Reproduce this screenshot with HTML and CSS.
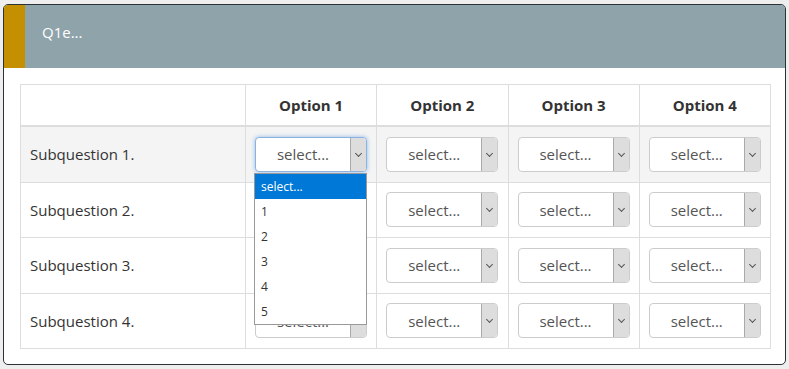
FILE: index.html
```html
<!DOCTYPE html>
<html lang="en">
<head>
  <meta charset="UTF-8">
  <title>Q1e</title>
  <link rel="stylesheet" href="styles.css">
</head>
<body>
<div class="card">
  <div class="card-header">
    <div class="marker"></div>
    <div class="title">Q1e...</div>
  </div>
  <div class="card-body">
    <table class="grid">
      <thead>
        <tr>
          <th class="label-col"></th>
          <th>Option 1</th>
          <th>Option 2</th>
          <th>Option 3</th>
          <th>Option 4</th>
        </tr>
      </thead>
      <tbody>
        <tr class="active">
          <td class="label">Subquestion 1.</td>
          <td>
            <div class="picker">
              <div class="select focused"><span class="value">select...</span><span class="arrow"></span></div>
              <ul class="options">
                <li class="selected">select...</li>
                <li>1</li>
                <li>2</li>
                <li>3</li>
                <li>4</li>
                <li>5</li>
              </ul>
            </div>
          </td>
          <td><div class="select"><span class="value">select...</span><span class="arrow"></span></div></td>
          <td><div class="select"><span class="value">select...</span><span class="arrow"></span></div></td>
          <td><div class="select"><span class="value">select...</span><span class="arrow"></span></div></td>
        </tr>
        <tr>
          <td class="label">Subquestion 2.</td>
          <td><div class="select"><span class="value">select...</span><span class="arrow"></span></div></td>
          <td><div class="select"><span class="value">select...</span><span class="arrow"></span></div></td>
          <td><div class="select"><span class="value">select...</span><span class="arrow"></span></div></td>
          <td><div class="select"><span class="value">select...</span><span class="arrow"></span></div></td>
        </tr>
        <tr>
          <td class="label">Subquestion 3.</td>
          <td><div class="select"><span class="value">select...</span><span class="arrow"></span></div></td>
          <td><div class="select"><span class="value">select...</span><span class="arrow"></span></div></td>
          <td><div class="select"><span class="value">select...</span><span class="arrow"></span></div></td>
          <td><div class="select"><span class="value">select...</span><span class="arrow"></span></div></td>
        </tr>
        <tr>
          <td class="label">Subquestion 4.</td>
          <td><div class="select"><span class="value">select...</span><span class="arrow"></span></div></td>
          <td><div class="select"><span class="value">select...</span><span class="arrow"></span></div></td>
          <td><div class="select"><span class="value">select...</span><span class="arrow"></span></div></td>
          <td><div class="select"><span class="value">select...</span><span class="arrow"></span></div></td>
        </tr>
      </tbody>
    </table>
  </div>
</div>
</body>
</html>
```

FILE: styles.css
```css
body {
  margin: 0;
  padding: 4px 3px;
  background-color: #eeeeee;
  font-family: "Open Sans", Arial, sans-serif;
  color: #333333;
}

.card {
  width: 781px;
  height: 359px;
  background-color: #ffffff;
  border: 1px solid #2b3238;
  border-radius: 5px;
  overflow: hidden;
  box-sizing: content-box;
}

.card-header {
  display: flex;
  height: 63px;
  background-color: #8fa3ab;
}

.marker {
  width: 21px;
  background-color: #c48f00;
}

.title {
  padding: 17px 0 0 17px;
  font-size: 15px;
  color: #ffffff;
}

.card-body {
  padding: 16px 16px 0 16px;
}

.grid {
  width: 751px;
  border-collapse: collapse;
  font-size: 15px;
}

.grid th,
.grid td {
  border: 1px solid #dddddd;
  padding: 0;
}

.grid th {
  height: 40px;
  font-weight: bold;
  text-align: center;
  color: #333333;
  border-bottom: 2px solid #dddddd;
}

.grid .label-col {
  width: 224px;
}

.grid td {
  height: 54.5px;
  padding: 0 9px;
}

.grid td.label {
  padding-left: 9px;
  color: #333333;
}

.grid tr.active td {
  background-color: #f4f4f4;
}

.picker {
  position: relative;
}

.select {
  display: flex;
  height: 35px;
  width: 112px;
  box-sizing: border-box;
  border: 1px solid #cccccc;
  border-radius: 4px;
  background-color: #ffffff;
  overflow: hidden;
}

.select.focused {
  border-color: #8ab3e0;
  box-shadow: 0 0 4px rgba(102, 160, 230, 0.7);
}

.select .value {
  flex: 1;
  display: flex;
  align-items: center;
  justify-content: center;
  color: #555555;
  font-size: 15px;
}

.select .arrow {
  width: 15px;
  background-color: #dddddd;
  border-left: 1px solid #aaaaaa;
  position: relative;
}

.select .arrow::after {
  content: "";
  position: absolute;
  left: 5px;
  top: 13px;
  width: 4px;
  height: 4px;
  border-right: 1px solid #555555;
  border-bottom: 1px solid #555555;
  transform: rotate(45deg);
}

.options {
  position: absolute;
  top: 36px;
  left: -1px;
  width: 113px;
  margin: 0;
  padding: 0;
  list-style: none;
  background-color: #ffffff;
  border: 1px solid #999999;
  box-sizing: border-box;
  z-index: 10;
}

.options li {
  height: 25px;
  line-height: 25px;
  padding-left: 6px;
  font-size: 12px;
  color: #333333;
}

.options li.selected {
  background-color: #0078d7;
  color: #ffffff;
}
```
